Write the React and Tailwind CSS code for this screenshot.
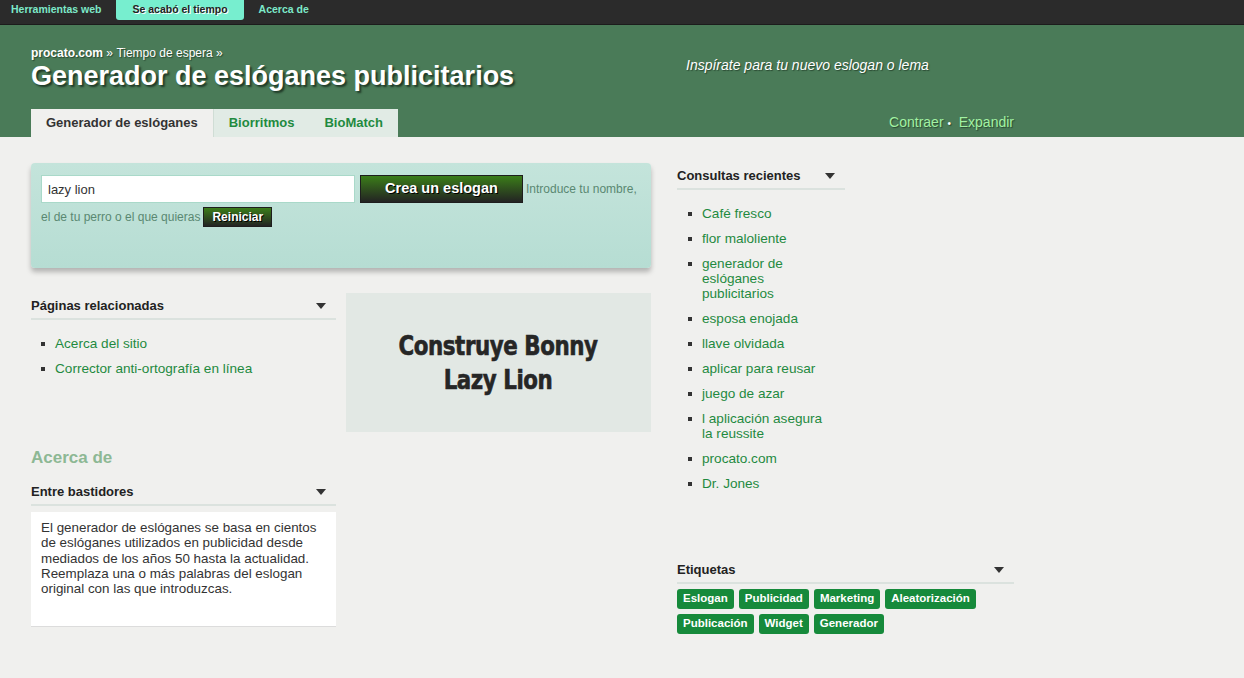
import React from 'react';

const Caret = () => (
  <span className="inline-block w-0 h-0 border-l-[5px] border-r-[5px] border-t-[6px] border-l-transparent border-r-transparent border-t-[#333]" />
);

const SectionHead = ({ title, className = '' }) => (
  <div className={`flex items-center justify-between h-[27px] border-b-2 border-[#dbe2de] pr-[10px] ${className}`}>
    <span className="text-[13px] font-bold text-[#222]">{title}</span>
    <Caret />
  </div>
);

const Bullet = ({ children, textWidth = '' }) => (
  <li className="flex items-start">
    <span className="mt-[6px] mr-[10px] w-[4px] h-[4px] bg-[#333] shrink-0" />
    <a className={`text-[13.6px] leading-[15px] text-[#1f8a3f] ${textWidth}`}>{children}</a>
  </li>
);

const recent = [
  'Café fresco',
  'flor maloliente',
  'generador de eslóganes publicitarios',
  'esposa enojada',
  'llave olvidada',
  'aplicar para reusar',
  'juego de azar',
  'l aplicación asegura la reussite',
  'procato.com',
  'Dr. Jones',
];

const tags = ['Eslogan', 'Publicidad', 'Marketing', 'Aleatorización', 'Publicación', 'Widget', 'Generador'];

export default function App() {
  return (
    <div className="min-h-screen bg-[#f0f0ee] font-['Liberation_Sans',Arial,sans-serif] text-[#333]">
      {/* top bar */}
      <div className="h-[25px] bg-[#2b2b2b] border-b border-[#1c1c1c] flex items-start text-[10.5px] font-bold">
        <a className="pl-[11px] pr-[15px] h-[20px] flex items-center text-[#7de9c9]">Herramientas web</a>
        <a className="px-[16px] h-[20px] flex items-center bg-[#77eecf] rounded-b-[3px] text-[#222] [text-shadow:1px_1px_0_#fff]">Se acabó el tiempo</a>
        <a className="px-[15px] h-[20px] flex items-center text-[#7de9c9]">Acerca de</a>
      </div>

      {/* green header */}
      <div className="bg-[#4a7b58]">
        <div className="w-[983px] ml-[31px] h-[112px] flex flex-col">
          <div className="flex flex-1">
            <div className="w-[646px] pt-[21px]">
              <div className="text-[12px] font-bold text-white leading-[14px] [text-shadow:1px_1px_1px_#2a4a32]">
                procato.com <span className="font-normal">»</span> <span className="font-normal">Tiempo de espera »</span>
              </div>
              <h1 className="text-[27px] font-bold text-white leading-[32px] [text-shadow:2px_2px_2px_#1f3826]">
                Generador de eslóganes publicitarios
              </h1>
            </div>
            <div className="pt-[30px] pl-[9px] text-[14px] italic text-white [text-shadow:1px_1px_1px_#2a4a32]">
              Inspírate para tu nuevo eslogan o lema
            </div>
          </div>
          <div className="flex items-end justify-between">
            <div className="flex h-[28px]">
              <a className="px-[15px] flex items-center bg-[#f0f0ee] text-[13px] font-bold text-[#333]">Generador de eslóganes</a>
              <div className="flex bg-[#e1ebe5] border-l border-[#d0ddd5]">
                <a className="px-[15px] flex items-center text-[13px] font-bold text-[#1f8a3f]">Biorritmos</a>
                <a className="px-[15px] flex items-center text-[13px] font-bold text-[#1f8a3f]">BioMatch</a>
              </div>
            </div>
            <div className="pb-[4px] text-[14px] text-[#a2f2a2] [text-shadow:1px_1px_1px_#2a4a32]">
              Contraer <span className="text-white text-[10px]">•</span>&nbsp; Expandir
            </div>
          </div>
        </div>
      </div>

      {/* body */}
      <div className="w-[983px] ml-[31px] pt-[26px] flex gap-[26px]">
        {/* left column */}
        <div className="w-[620px]">
          <div className="h-[105px] rounded-[4px] bg-[linear-gradient(#c4e4db,#b6ddd3)] shadow-[0_4px_5px_rgba(0,0,0,0.25)] px-[10px] pt-[12px] text-[12px] text-[#5a8872]">
            <div className="flex items-center h-[28px]">
              <input
                defaultValue="lazy lion"
                className="w-[314px] h-[28px] bg-white border border-[#a9d9c9] px-[6px] text-[13px] text-[#333] outline-none"
              />
              <button className="ml-[5px] w-[163px] h-[28px] bg-[linear-gradient(#3b7d19,#232323)] border border-[#1e1e1e] text-white text-[14.5px] font-bold [text-shadow:1px_1px_0_#000]">
                Crea un eslogan
              </button>
              <span className="ml-[3px] whitespace-nowrap">Introduce tu nombre,</span>
            </div>
            <div className="flex items-center h-[28px]">
              <span className="whitespace-nowrap">el de tu perro o el que quieras</span>
              <button className="ml-[3px] h-[20px] px-[8px] bg-[linear-gradient(#3b7d19,#232323)] border border-[#1e1e1e] text-white text-[12px] font-bold leading-[18px] [text-shadow:1px_1px_0_#000]">
                Reiniciar
              </button>
            </div>
          </div>

          <div className="mt-[25px] flex gap-[10px]">
            <div className="w-[305px]">
              <SectionHead title="Páginas relacionadas" className="pt-[1px]" />
              <ul className="pl-[10px] pt-[16px] space-y-[10px]">
                <Bullet>Acerca del sitio</Bullet>
                <Bullet>Corrector anti-ortografía en línea</Bullet>
              </ul>
            </div>
            <div className="w-[305px] h-[139px] bg-[#e2e8e4] flex items-center justify-center text-center">
              <div className="font-['Impact','Liberation_Sans_Narrow','DejaVu_Sans_Condensed',sans-serif] font-bold text-[27px] leading-[34px] text-[#262626] tracking-[-0.5px] scale-x-[0.88] [-webkit-text-stroke:0.6px_#262626]">
                Construye Bonny<br />Lazy Lion
              </div>
            </div>
          </div>

          <div className="w-[305px] mt-[15px]">
            <h2 className="text-[17px] font-bold text-[#8db894] leading-[22px]">Acerca de</h2>
            <SectionHead title="Entre bastidores" className="mt-[10px]" />
            <div className="mt-[6px] h-[115px] bg-white border-b border-[#dcdcdc] px-[10px] pt-[8px] text-[13.4px] leading-[15.3px] text-[#333]">
              El generador de eslóganes se basa en cientos de eslóganes utilizados en publicidad desde mediados de los años 50 hasta la actualidad. Reemplaza una o más palabras del eslogan original con las que introduzcas.
            </div>
          </div>
        </div>

        {/* right column */}
        <div className="w-[337px]">
          <div className="w-[168px]">
            <SectionHead title="Consultas recientes" className="pt-[1px]" />
            <ul className="pl-[11px] pt-[16px] space-y-[10px]">
              {recent.map((r) => (
                <Bullet key={r} textWidth="w-[126px]">{r}</Bullet>
              ))}
            </ul>
          </div>

          <div className="mt-[66px]">
            <SectionHead title="Etiquetas" />
            <div className="mt-[5px] flex flex-wrap gap-x-[5px] gap-y-[5px]">
              {tags.map((t) => (
                <span key={t} className="h-[20px] px-[6px] flex items-center rounded-[3px] bg-[#168a3b] text-white text-[11.5px] font-bold">
                  {t}
                </span>
              ))}
            </div>
          </div>
        </div>
      </div>
    </div>
  );
}
